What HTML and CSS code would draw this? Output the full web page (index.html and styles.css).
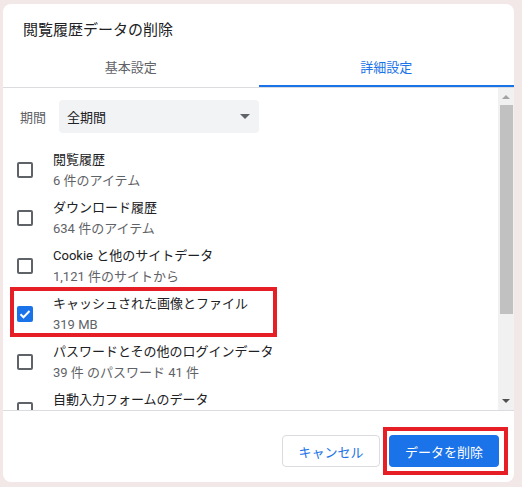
FILE: index.html
```html
<!DOCTYPE html>
<html lang="ja">
<head>
<meta charset="utf-8">
<link rel="stylesheet" href="styles.css">
</head>
<body>
<div class="dialog">
  <div class="title">閲覧履歴データの削除</div>
  <div class="tabs">
    <div class="tab">基本設定</div>
    <div class="tab active">詳細設定</div>
  </div>
  <div class="body">
    <div class="content">
      <div class="period">
        <span class="period-label">期間</span>
        <div class="select">
          <span>全期間</span>
          <span class="caret"></span>
        </div>
      </div>
      <div class="item">
        <span class="cb"></span>
        <div class="texts"><div class="t1">閲覧履歴</div><div class="t2">6 件のアイテム</div></div>
      </div>
      <div class="item">
        <span class="cb"></span>
        <div class="texts"><div class="t1">ダウンロード履歴</div><div class="t2">634 件のアイテム</div></div>
      </div>
      <div class="item">
        <span class="cb"></span>
        <div class="texts"><div class="t1">Cookie と他のサイトデータ</div><div class="t2">1,121 件のサイトから</div></div>
      </div>
      <div class="item marked">
        <span class="cb checked"><svg viewBox="0 0 16 16" width="16" height="16"><path d="M3.5 8.2l3 3 6-6.2" fill="none" stroke="#fff" stroke-width="2"/></svg></span>
        <div class="texts"><div class="t1">キャッシュされた画像とファイル</div><div class="t2">319 MB</div></div>
      </div>
      <div class="item">
        <span class="cb"></span>
        <div class="texts"><div class="t1">パスワードとその他のログインデータ</div><div class="t2">39 件 のパスワード 41 件</div></div>
      </div>
      <div class="item">
        <span class="cb"></span>
        <div class="texts"><div class="t1">自動入力フォームのデータ</div><div class="t2">&nbsp;</div></div>
      </div>
    </div>
    <div class="scrollbar">
      <span class="arrow up"></span>
      <span class="thumb"></span>
      <span class="track-rest"></span>
      <span class="arrow down"></span>
    </div>
  </div>
  <div class="footer">
    <button class="btn cancel">キャンセル</button>
    <span class="mark-wrap"><button class="btn primary">データを削除</button></span>
  </div>
</div>
</body>
</html>
```

FILE: styles.css
```css
html, body {
  margin: 0;
  padding: 0;
  background: #f2e8e7;
}
body {
  padding: 4px 0 0 3px;
  font-family: Roboto, "Noto Sans CJK JP", sans-serif;
  color: #202124;
}
.dialog {
  width: 511px;
  height: 478px;
  background: #fff;
  border-radius: 8px;
  display: flex;
  flex-direction: column;
  overflow: hidden;
}
.title {
  padding: 16px 0 0 20px;
  font-size: 15px;
  line-height: 21px;
  height: 21px;
  color: #202124;
}
.tabs {
  display: flex;
  height: 46px;
  border-bottom: 1px solid #dadce0;
}
.tab {
  flex: 1;
  display: flex;
  align-items: center;
  justify-content: center;
  padding-top: 4px;
  font-size: 13px;
  color: #5f6368;
  box-sizing: border-box;
}
.tab.active {
  color: #1a73e8;
  box-shadow: inset 0 -2px 0 #1a73e8;
}
.body {
  display: flex;
  height: 322px;
}
.content {
  flex: 1;
  overflow: hidden;
  padding-top: 12px;
}
.period {
  display: flex;
  align-items: center;
  padding-left: 17px;
  margin-bottom: 13px;
}
.period-label {
  font-size: 13px;
  color: #5f6368;
  width: 39px;
}
.select {
  width: 200px;
  height: 33px;
  box-sizing: border-box;
  background: #f1f3f4;
  border-radius: 4px;
  display: flex;
  align-items: center;
  justify-content: space-between;
  padding: 0 9px 0 8px;
  font-size: 13px;
  color: #202124;
}
.caret {
  width: 0;
  height: 0;
  border-left: 5px solid transparent;
  border-right: 5px solid transparent;
  border-top: 5px solid #5f6368;
}
.item {
  height: 48px;
  display: flex;
  align-items: center;
  padding-left: 14px;
  position: relative;
}
.cb {
  width: 16px;
  height: 16px;
  box-sizing: border-box;
  border: 2px solid #5f6368;
  border-radius: 2px;
  flex: none;
  margin-right: 20px;
  display: flex;
}
.cb.checked {
  background: #1a73e8;
  border: none;
}
.texts {
  font-size: 13px;
  line-height: 21px;
}
.t1 { color: #202124; }
.t2 { color: #5f6368; }
.item.marked::after {
  content: "";
  position: absolute;
  left: 7px;
  top: -3px;
  width: 267px;
  height: 50px;
  box-sizing: border-box;
  border: 4px solid #e61e25;
}
.scrollbar {
  width: 16px;
  background: #f1f1f1;
  display: flex;
  flex-direction: column;
  align-items: center;
}
.arrow {
  width: 0;
  height: 0;
  border-left: 4px solid transparent;
  border-right: 4px solid transparent;
  flex: none;
}
.arrow.up {
  border-bottom: 4px solid #a3a3a3;
  margin-top: 7px;
}
.arrow.down {
  border-top: 4px solid #505050;
  margin-bottom: 7px;
}
.thumb {
  width: 13px;
  margin-left: 1px;
  height: 209px;
  margin-top: 6px;
  background: #c1c1c1;
  flex: none;
}
.track-rest { flex: 1; }
.footer {
  border-top: 1px solid #dadce0;
  display: flex;
  justify-content: flex-end;
  align-items: flex-start;
  gap: 9px;
  padding: 24px 15px 0 0;
  flex: 1;
}
.btn {
  height: 32px;
  font-family: Roboto, "Noto Sans CJK JP", sans-serif;
  font-size: 13px;
  border-radius: 4px;
  padding: 0;
  cursor: pointer;
}
.cancel {
  width: 98px;
  background: #fff;
  border: 1px solid #dadce0;
  color: #1a73e8;
}
.primary {
  width: 110px;
  background: #1a73e8;
  border: none;
  color: #fff;
}
.mark-wrap {
  position: relative;
  display: flex;
}
.mark-wrap::after {
  content: "";
  position: absolute;
  left: -6px;
  top: -8px;
  right: -9px;
  bottom: -8px;
  border: 4px solid #e61e25;
}
```
